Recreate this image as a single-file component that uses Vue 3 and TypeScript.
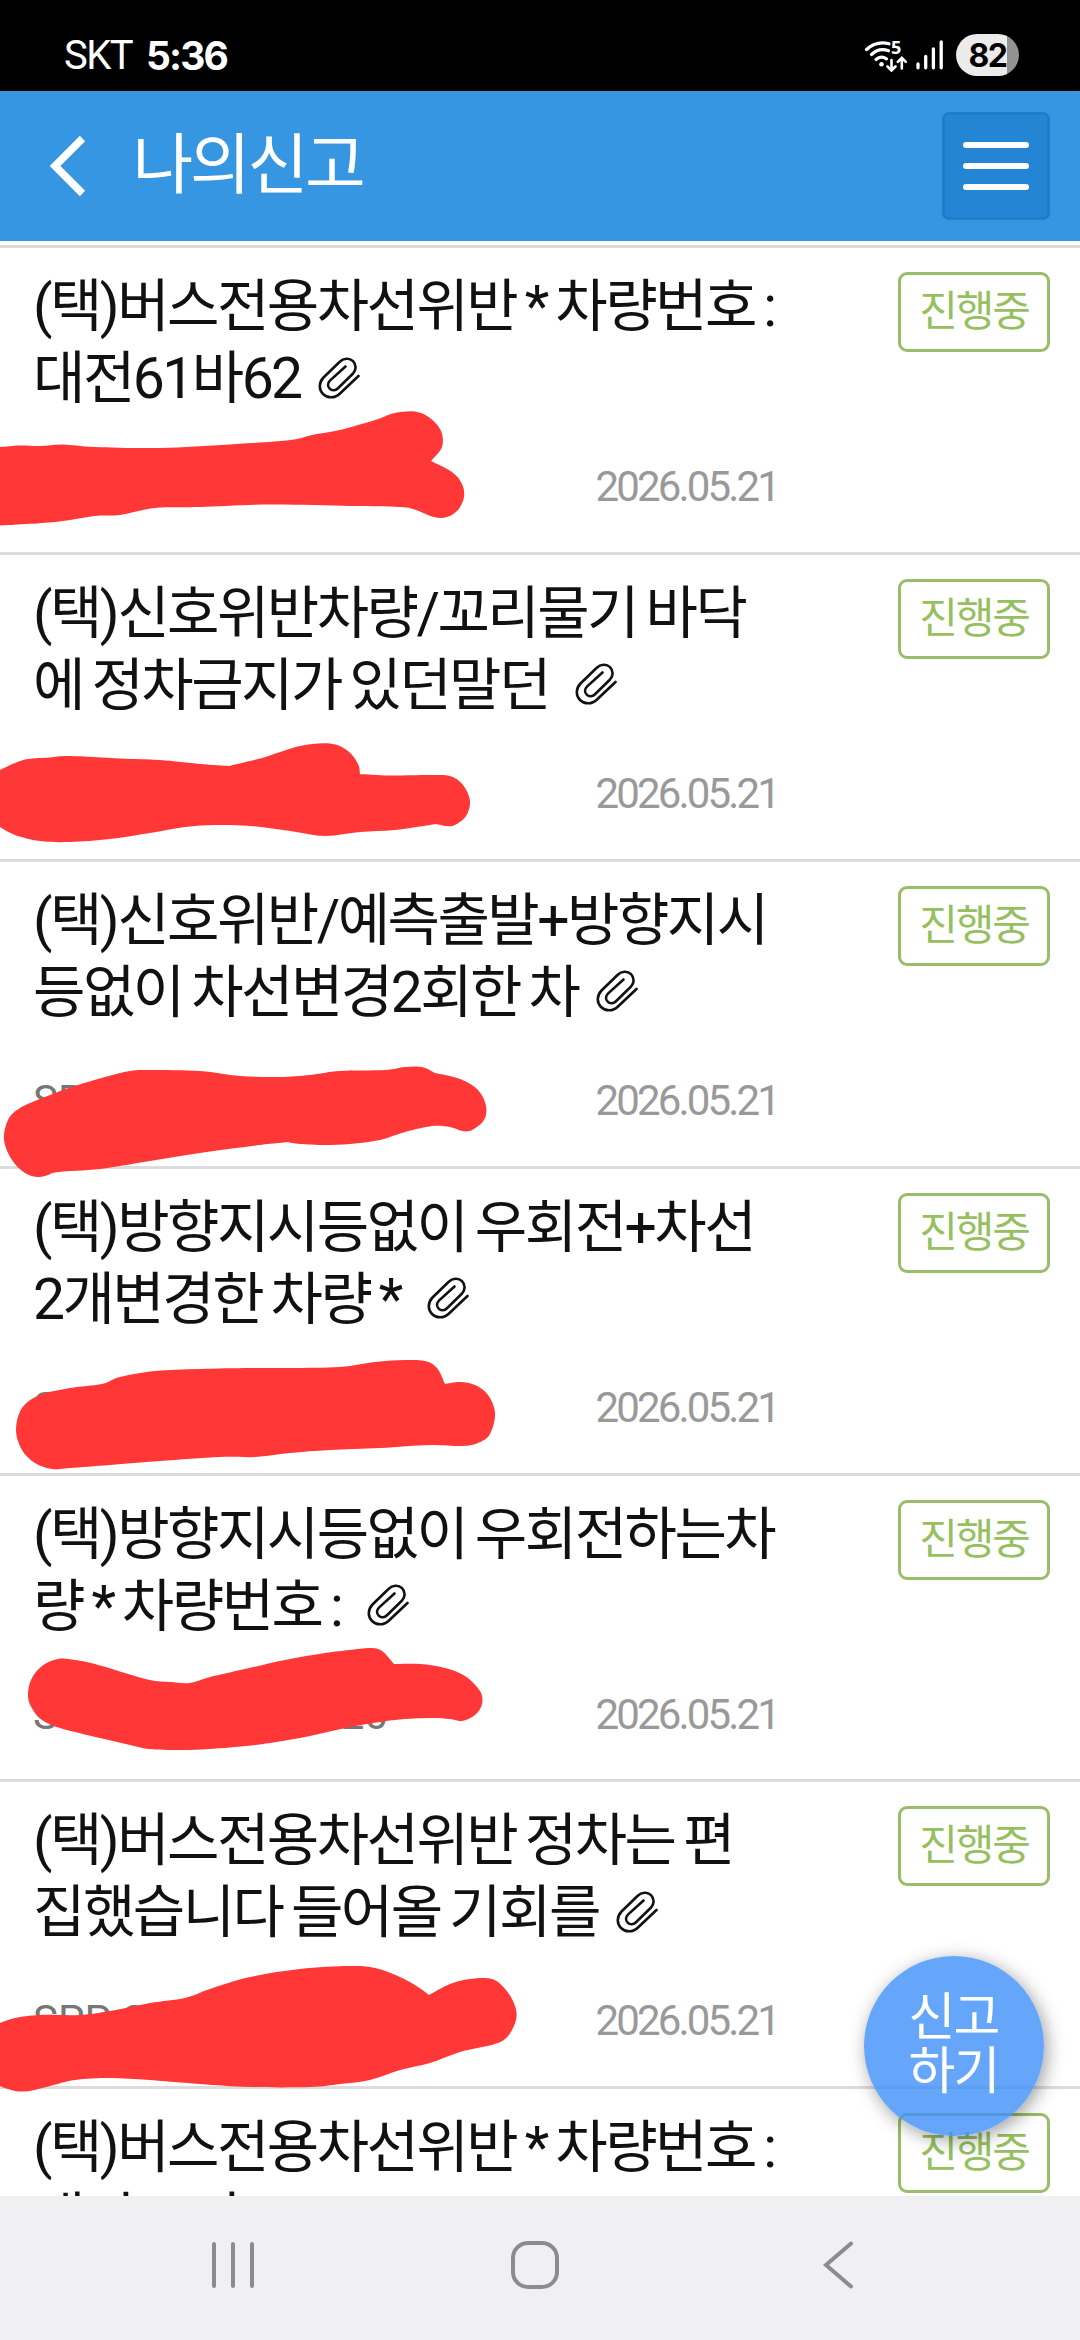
<script setup lang="ts">
interface Report {
  lines: [string, string]
  idHead?: string
  idTail?: string
}

type Point = [number, number]

const reports: Report[] = [
  { lines: ['(택)버스전용차선위반 * 차량번호 :', '대전61바62 '] },
  { lines: ['(택)신호위반차량/꼬리물기 바닥', '에 정차금지가 있던말던  '] },
  { lines: ['(택)신호위반/예측출발+방향지시', '등없이 차선변경2회한 차 '], idHead: 'SP' },
  { lines: ['(택)방향지시등없이 우회전+차선', '2개변경한 차량 *  '], idHead: 'SP' },
  { lines: ['(택)방향지시등없이 우회전하는차', '량 * 차량번호 :  '], idHead: 'S', idTail: '20' },
  { lines: ['(택)버스전용차선위반 정차는 편', '집했습니다 들어올 기회를 '], idHead: 'SPP-2' },
  { lines: ['(택)버스전용차선위반 * 차량번호 :', '대전61바62 '] },
]

const date = '2026.05.21'

// Outlines of the marker strokes; a repeated point makes a sharp corner.
const markerOutlines: string[] = [
  '-10,447 0,447 20,445.5 40,446 63,444.5 95,447 160,448 230,444.5 290,440 312,435 340,430 375,420 395,413 415,411.5 430,418 441,431 442,447 431,461 431,461 452,472 462,484 464,497 458,510 447,517 434,517 416,510 400,507 350,506 270,504.5 200,507 155,508 120,515 95,516 55,522 0,525.5 -10,526',
  '-10,775 0,770 15,763 28,759 50,757.5 70,756 120,758.5 160,760 200,764 229,766 229,766 262,758 300,746 330,743.5 348,751 358,764 360,774 360,774 390,775.5 430,775 450,776 463,785 470,801 466,816 455,825 447,826 436,824 436,824 395,830 360,832 325,836 290,831 250,826 215,825 185,827 150,833 110,839 70,842 40,841 15,835 0,827 -10,820',
  '4,1140 8,1120 20,1108 45,1097 75,1086 105,1077 130,1071 150,1070 200,1071 240,1076 280,1077 310,1075 340,1071 385,1070 405,1067 422,1067 435,1073 435,1073 460,1079 478,1090 486,1106 484,1120 472,1130 462,1131 450,1127 432,1126 405,1132 380,1140 350,1144 325,1145 300,1144 288,1142 288,1142 260,1145 200,1153 150,1161 100,1169 58,1172 48,1175 38,1177 25,1173 12,1160',
  '16,1430 22,1408 40,1395 70,1388 102,1384 120,1377 155,1371 200,1369 250,1368 290,1368 340,1367 375,1362 405,1360 425,1361 437,1368 445,1384 445,1384 460,1382 475,1385 488,1395 495,1413 490,1434 478,1443 462,1446 430,1445 380,1448 330,1450 290,1453 255,1457 220,1457 160,1461 110,1465 70,1468 52,1469 35,1463 22,1450',
  '28,1697 31,1680 42,1666 58,1659 75,1660 95,1664 125,1673 150,1680 170,1682 190,1683 210,1677 245,1669 285,1660 325,1653 350,1650 370,1648 382,1651 394,1664 394,1664 420,1664 445,1668 465,1676 480,1691 482,1704 475,1715 462,1721 450,1719 430,1718 395,1720 350,1727 310,1736 270,1743 235,1747 190,1750 150,1749 130,1745 100,1738 60,1728 42,1720 33,1710',
  '-10,2027 0,2023 15,2018 40,2015 80,2015 110,2011 150,2003 185,1998 210,1989 250,1977 300,1969 350,1966 375,1968 400,1977 418,1987 429,1995 429,1995 450,1984 470,1979 492,1979 506,1990 515,2006 516,2020 508,2036 495,2044 460,2052 430,2063 400,2070 370,2080 340,2084 310,2087 250,2087 200,2084 150,2080 110,2078 75,2080 50,2086 30,2091 15,2091 0,2086 -10,2080',
]

function smoothPath(outline: string): string {
  const pts = outline.split(' ').map((p) => p.split(',').map(Number) as Point)
  const n = pts.length
  let d = `M${pts[0][0]} ${pts[0][1]}`
  for (let i = 0; i < n; i++) {
    const a = pts[(i - 1 + n) % n]
    const b = pts[i]
    const c = pts[(i + 1) % n]
    const e = pts[(i + 2) % n]
    d += `C${b[0] + (c[0] - a[0]) / 6} ${b[1] + (c[1] - a[1]) / 6} ${c[0] - (e[0] - b[0]) / 6} ${c[1] - (e[1] - b[1]) / 6} ${c[0]} ${c[1]}`
  }
  return d + 'Z'
}

const markers = markerOutlines.map(smoothPath)
</script>

<template>
  <div class="screen">
    <div class="status">
      <span class="carrier">SKT</span>
      <span class="clock">5:36</span>
      <svg class="signals" width="80" height="34" viewBox="864 38 80 34">
        <g fill="none" stroke="#fff" stroke-width="3.2" stroke-linecap="round">
          <path d="M866.5 49.5C872 44.500 880 41.500 889 43.800" />
          <path d="M871.500 54.500C876 50.300 882 48.500 888.500 50.800" />
          <path d="M876 59.500C879 56.800 883 56.500 886.500 58.800" />
          <path stroke-width="2.600" d="M891.500 60V70M887.500 66.500L891.500 70.500L895.500 66.500" />
          <path stroke-width="2.600" d="M901.800 68.500V58M897.800 61.800L901.800 57.800L905.800 61.800" />
          <path stroke-width="3.300" d="M918 64V67.800M925.700 56.500V67.800M933.400 49V67.800M941.200 42V67.800" />
        </g>
        <circle cx="881.500" cy="64.200" r="2.300" fill="#fff" />
        <text x="891" y="54.200" class="band">5</text>
      </svg>
      <span class="battery">82</span>
    </div>

    <header class="header">
      <svg class="back" width="36" height="62" viewBox="0 0 36 62">
        <path d="M32.500 3.500L5 31L32.500 58.500" fill="none" stroke="#fff" stroke-width="7.500" />
      </svg>
      <h1>나의신고</h1>
      <button class="menu" type="button"><i></i><i></i><i></i></button>
    </header>

    <ul class="list">
      <li v-for="(report, i) in reports" :key="i" class="row">
        <div class="body">
          <div class="line">{{ report.lines[0] }}</div>
          <div class="line">
            <span>{{ report.lines[1] }}</span>
            <svg class="clip" width="42" height="42" viewBox="0 0 42 42">
              <path
                d="M40.500 19L22 36.500C17 41.500 9.500 41.500 5 37C.5 32.500.8 25.500 5.500 20.500L21.500 5C25.500 1 31.500.7 35 4.200C38.500 7.700 38.500 13 34.800 16.800L20 31.200C17.500 33.700 14 34 11.700 31.700C9.400 29.400 9.600 26 12.200 23.400L27.500 9.500"
              />
            </svg>
          </div>
          <div class="meta">
            <span class="ident"><span>{{ report.idHead }}</span><span>{{ report.idTail }}</span></span>
            <time>{{ date }}</time>
          </div>
        </div>
        <span class="badge">진행중</span>
      </li>
    </ul>

    <nav class="nav">
      <svg width="44" height="50" viewBox="0 0 44 50">
        <path d="M3 4V46M22 4V46M41 4V46" />
      </svg>
      <svg class="home" width="50" height="50" viewBox="0 0 50 50">
        <rect x="3" y="3" width="44" height="44" rx="15" />
      </svg>
      <svg width="32" height="50" viewBox="0 0 32 50">
        <path d="M29 3.500L4 25L29 46.500" />
      </svg>
    </nav>

    <svg class="markers" width="1080" height="2340" viewBox="0 0 1080 2340">
      <path v-for="(d, i) in markers" :key="i" :d="d" />
    </svg>
    <button class="fab" type="button">신고<br />하기</button>
  </div>
</template>

<style>
body {
  margin: 0;
  background: #fff;
}
</style>

<style scoped>
.screen {
  position: relative;
  display: flex;
  flex-direction: column;
  width: 1080px;
  height: 2340px;
  overflow: hidden;
  background: #fff;
  font-family: Roboto, 'Noto Sans CJK KR', sans-serif;
}
.status {
  display: flex;
  align-items: center;
  flex: none;
  box-sizing: border-box;
  height: 91px;
  padding: 19px 62px 0 64px;
  background: #000;
  color: #fff;
}
.carrier {
  width: 82px;
  font-size: 40px;
  font-weight: 400;
  letter-spacing: -1.500px;
}
.clock {
  font-family: Inter, sans-serif;
  font-size: 39px;
  font-weight: 650;
  letter-spacing: -1.900px;
}
.signals {
  margin-left: auto;
}
.band {
  fill: #fff;
  font: 700 18px 'Open Sans', sans-serif;
}
.battery {
  box-sizing: border-box;
  width: 63px;
  height: 42px;
  margin-left: 12px;
  margin-right: -1px;
  border-radius: 21px;
  background: linear-gradient(90deg, #ebebeb 51.500px, #929292 51.500px);
  color: #000;
  font: 700 32px/43px Inter, sans-serif;
  text-align: center;
  letter-spacing: -1.500px;
}
.header {
  display: flex;
  align-items: center;
  flex: none;
  box-sizing: border-box;
  height: 150px;
  padding: 0 30px 0 50px;
  background: #3796e1;
}
.back {
  flex: none;
}
h1 {
  margin: 0 auto 0 46.500px;
  color: #fff;
  font-size: 66px;
  font-weight: 400;
  line-height: 90px;
  letter-spacing: -3.200px;
}
.menu {
  display: flex;
  flex-direction: column;
  align-items: center;
  justify-content: center;
  gap: 15px;
  width: 108px;
  height: 108px;
  padding: 0;
  border: 3px solid #1f7dca;
  border-radius: 7px;
  background: #2585d5;
}
.menu i {
  width: 66px;
  height: 6px;
  border-radius: 3px;
  background: #fff;
}
.list {
  flex: 1;
  min-height: 0;
  overflow: hidden;
  margin: 4px 0 0;
  padding: 0;
  border-top: 3px solid #dedcda;
  list-style: none;
}
.row {
  display: flex;
  justify-content: space-between;
  align-items: flex-start;
  box-sizing: border-box;
  height: 306.900px;
  padding: 23px 30px 0 33px;
  border-bottom: 3px solid #dcdcdc;
}
.body {
  width: 745px;
}
.line {
  display: flex;
  align-items: center;
  height: 72px;
  color: #111;
  font-size: 57px;
  line-height: 72px;
  letter-spacing: -2.550px;
  word-spacing: -3.100px;
  white-space: pre;
}
.clip {
  margin: 0 0 3px 9px;
  fill: none;
  stroke: #111;
  stroke-width: 2.600;
  stroke-linecap: round;
}
.meta {
  display: flex;
  justify-content: space-between;
  margin-top: 47px;
  color: #777;
  font-size: 42px;
  line-height: 50px;
}
.ident {
  display: flex;
  justify-content: space-between;
  width: 355px;
}
time {
  color: #999;
  letter-spacing: -2.850px;
}
.badge {
  box-sizing: border-box;
  width: 152px;
  height: 80px;
  margin-top: 1px;
  border: 3px solid #99bd69;
  border-radius: 9px;
  color: #96c05f;
  font-size: 42px;
  line-height: 73px;
  letter-spacing: -2.100px;
  text-align: center;
}
.nav {
  display: flex;
  align-items: center;
  justify-content: space-between;
  flex: none;
  box-sizing: border-box;
  height: 144px;
  padding: 0 226px 6px 211px;
  background: #f0f0f3;
}
.nav svg {
  fill: none;
  stroke: #8c8c8e;
  stroke-width: 4;
  stroke-linecap: round;
}
.nav .home {
  margin-right: 7px;
}
.markers {
  position: absolute;
  inset: 0;
  fill: #ff3736;
  pointer-events: none;
}
.fab {
  position: absolute;
  left: 864px;
  top: 1956px;
  width: 180px;
  height: 180px;
  padding: 0 1px 2px 0;
  border: 0;
  border-radius: 50%;
  background: rgba(64, 144, 249, 0.8);
  box-shadow: 3px 4px 18px rgba(0, 0, 0, 0.38);
  color: #fff;
  font-family: inherit;
  font-size: 51px;
  line-height: 54px;
  letter-spacing: -2px;
}
</style>
